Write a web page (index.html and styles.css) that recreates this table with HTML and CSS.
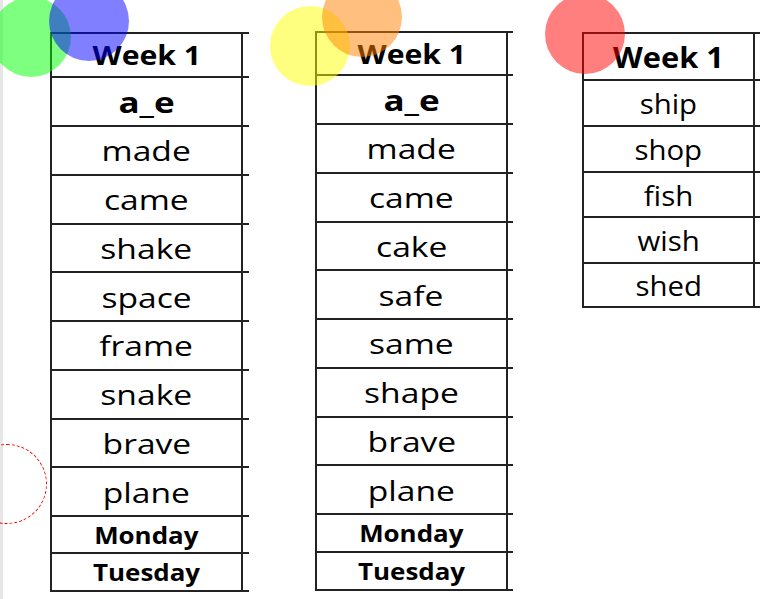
FILE: index.html
```html
<!DOCTYPE html>
<html lang="en">
<head>
<meta charset="utf-8">
<title>Week 1 spellings</title>
<link rel="stylesheet" href="styles.css">
</head>
<body>
<div class="page">
  <div class="strip"></div>
  <div class="sheet">
    <div class="tbl t1">
      <div class="row head"><div class="cell"><span class="txt">Week 1</span></div><div class="stub"></div></div>
      <div class="row sound"><div class="cell"><span class="txt">a_e</span></div><div class="stub"></div></div>
      <div class="row word"><div class="cell"><span class="txt">made</span></div><div class="stub"></div></div>
      <div class="row word"><div class="cell"><span class="txt">came</span></div><div class="stub"></div></div>
      <div class="row word"><div class="cell"><span class="txt">shake</span></div><div class="stub"></div></div>
      <div class="row word"><div class="cell"><span class="txt">space</span></div><div class="stub"></div></div>
      <div class="row word"><div class="cell"><span class="txt">frame</span></div><div class="stub"></div></div>
      <div class="row word"><div class="cell"><span class="txt">snake</span></div><div class="stub"></div></div>
      <div class="row word"><div class="cell"><span class="txt">brave</span></div><div class="stub"></div></div>
      <div class="row word"><div class="cell"><span class="txt">plane</span></div><div class="stub"></div></div>
      <div class="row day mon"><div class="cell"><span class="txt">Monday</span></div><div class="stub"></div></div>
      <div class="row day tue"><div class="cell"><span class="txt">Tuesday</span></div><div class="stub"></div></div>
    </div>
    <div class="tbl t2">
      <div class="row head"><div class="cell"><span class="txt">Week 1</span></div><div class="stub"></div></div>
      <div class="row sound"><div class="cell"><span class="txt">a_e</span></div><div class="stub"></div></div>
      <div class="row word"><div class="cell"><span class="txt">made</span></div><div class="stub"></div></div>
      <div class="row word"><div class="cell"><span class="txt">came</span></div><div class="stub"></div></div>
      <div class="row word"><div class="cell"><span class="txt">cake</span></div><div class="stub"></div></div>
      <div class="row word"><div class="cell"><span class="txt">safe</span></div><div class="stub"></div></div>
      <div class="row word"><div class="cell"><span class="txt">same</span></div><div class="stub"></div></div>
      <div class="row word"><div class="cell"><span class="txt">shape</span></div><div class="stub"></div></div>
      <div class="row word"><div class="cell"><span class="txt">brave</span></div><div class="stub"></div></div>
      <div class="row word"><div class="cell"><span class="txt">plane</span></div><div class="stub"></div></div>
      <div class="row day mon"><div class="cell"><span class="txt">Monday</span></div><div class="stub"></div></div>
      <div class="row day tue"><div class="cell"><span class="txt">Tuesday</span></div><div class="stub"></div></div>
    </div>
    <div class="tbl t3">
      <div class="row head"><div class="cell"><span class="txt">Week 1</span></div><div class="stub"></div></div>
      <div class="row word r1"><div class="cell"><span class="txt">ship</span></div><div class="stub"></div></div>
      <div class="row word r2"><div class="cell"><span class="txt">shop</span></div><div class="stub"></div></div>
      <div class="row word r3"><div class="cell"><span class="txt">fish</span></div><div class="stub"></div></div>
      <div class="row word r4"><div class="cell"><span class="txt">wish</span></div><div class="stub"></div></div>
      <div class="row word r5"><div class="cell"><span class="txt">shed</span></div><div class="stub"></div></div>
    </div>
  </div>
  <div class="dot green"></div>
  <div class="dot blue"></div>
  <div class="dot yellow"></div>
  <div class="dot orange"></div>
  <div class="dot red"></div>
  <div class="ring"></div>
</div>
</body>
</html>
```
FILE: styles.css
```css
* { box-sizing: border-box; }
html, body { margin: 0; padding: 0; background: #fff; }
body { font-family: "Open Sans", "Liberation Sans", sans-serif; color: #000; overflow: hidden; }

.page { position: relative; display: flex; width: 779px; height: 599px; }
.strip { width: 3px; background: #e6e6e6; flex: none; }
.sheet { display: flex; align-items: flex-start; padding-left: 47px; }

.tbl { display: flex; flex-direction: column; border-bottom: 2px solid #222; }
.t1 { margin-top: 32px; width: 199px; }
.t2 { margin-top: 31px; margin-left: 66px; width: 198px; }
.t3 { margin-top: 32px; margin-left: 69px; width: 178px; }

.row { display: flex; border-top: 2px solid #222; }
.cell {
  flex: 1; display: flex; align-items: center; justify-content: center;
  border-left: 2px solid #222; border-right: 2px solid #222;
}
.stub { width: 6px; flex: none; }
.t2 .stub { width: 5px; }
.t3 .stub { width: 5px; }

.txt { display: inline-block; font-size: 28px; font-weight: 500; line-height: 1; transform: scaleX(1.2); white-space: nowrap; }
.head .txt { font-weight: 700; font-size: 26px; transform: scaleX(1.16); }
.sound .txt { font-weight: 700; font-size: 28px; transform: scaleX(1.25); }
.day .txt { font-weight: 700; font-size: 24px; transform: scaleX(1.08); }

.t1 .head { height: 44px; }
.t1 .sound { height: 49px; }
.t1 .word { height: 48.75px; }
.t1 .mon { height: 37px; }
.t1 .tue { height: 38px; }

.t2 .head { height: 43px; }
.t2 .sound { height: 49px; }
.t2 .word { height: 48.75px; }
.t2 .mon { height: 38px; }
.t2 .tue { height: 38px; }

.t3 .head { height: 47px; }
.t3 .head .txt { font-size: 28px; transform: scaleX(1.1); }
.t3 .txt { transform: scaleX(1.05); }
.t3 .r1, .t3 .r2, .t3 .r4 { height: 46px; }
.t3 .r3 { height: 45px; }
.t3 .r5 { height: 44px; }

.dot { position: absolute; width: 80px; height: 80px; border-radius: 50%; }
.green { left: -9px; top: -3px; background: rgba(0, 255, 0, 0.5); }
.blue { left: 49px; top: -19px; background: rgba(0, 0, 255, 0.5); }
.yellow { left: 270px; top: 6px; background: rgba(255, 255, 0, 0.5); }
.orange { left: 322px; top: -23px; background: rgba(255, 128, 0, 0.5); }
.red { left: 545px; top: -6px; background: rgba(255, 0, 0, 0.5); }
.ring { position: absolute; left: -33px; top: 444px; width: 80px; height: 80px; border-radius: 50%; border: 1px dashed #e00; }
```
